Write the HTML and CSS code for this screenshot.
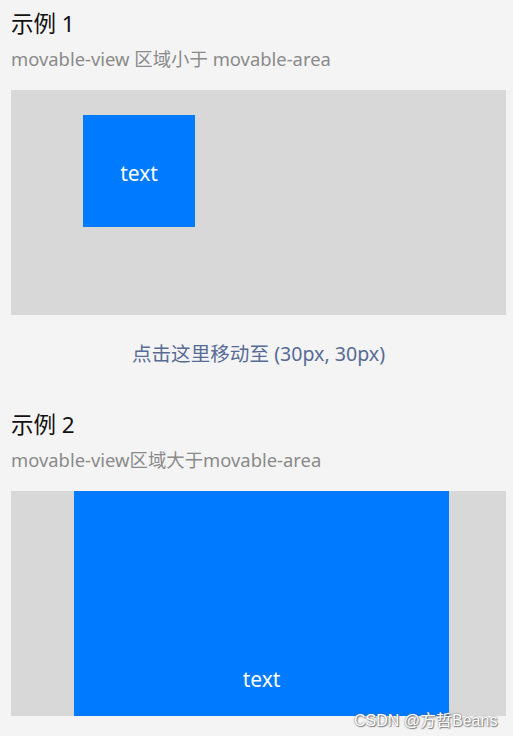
FILE: index.html
```html
<!DOCTYPE html>
<html lang="zh-CN">
<head>
    <meta charset="UTF-8">
    <meta name="viewport" content="width=device-width, initial-scale=1.0">
    <title>movable-view</title>
    <link rel="stylesheet" href="styles.css">
</head>
<body>
    <div class="page">
        <div class="section">
            <div class="title">示例 1</div>
            <div class="desc">movable-view 区域小于 movable-area</div>
            <div class="area">
                <div class="view small">text</div>
            </div>
            <div class="link">点击这里移动至 (30px, 30px)</div>
        </div>
        <div class="section">
            <div class="title">示例 2</div>
            <div class="desc">movable-view区域大于movable-area</div>
            <div class="area">
                <div class="view large">text</div>
            </div>
        </div>
    </div>
    <div class="watermark">CSDN @方哲Beans</div>
</body>
</html>
```

FILE: styles.css
```css
body {
    margin: 0;
    background-color: #f4f4f4;
    font-family: "Noto Sans", "Noto Sans CJK SC", sans-serif;
}
.page {
    padding: 0 7px 0 11px;
}
.section {
    padding-top: 8px;
}
.title {
    font-size: 22.5px;
    line-height: 32px;
    color: #111;
}
.desc {
    margin-top: 6px;
    font-size: 18.4px;
    line-height: 26px;
    color: #8a8a8a;
}
.area {
    margin-top: 18px;
    height: 225px;
    background-color: #d8d8d8;
    overflow: hidden;
}
.view {
    background-color: #007aff;
    color: #fff;
    text-align: center;
    font-size: 21px;
}
.view.small {
    width: 112px;
    height: 112px;
    line-height: 117px;
    overflow: hidden;
    margin: 25px 0 0 72px;
}
.view.large {
    width: 375px;
    height: 375px;
    line-height: 377px;
    margin-left: 63px;
}
.link {
    padding: 24px 0 32px;
    text-align: center;
    font-size: 19.6px;
    line-height: 30px;
    color: #576b95;
}
.watermark {
    position: absolute;
    left: 354px;
    top: 707px;
    font-family: "Liberation Sans", "Noto Sans CJK SC", sans-serif;
    font-size: 16px;
    color: #fff;
    text-shadow: 0 0 2px #666, 1px 1px 1px #888;
}
```
